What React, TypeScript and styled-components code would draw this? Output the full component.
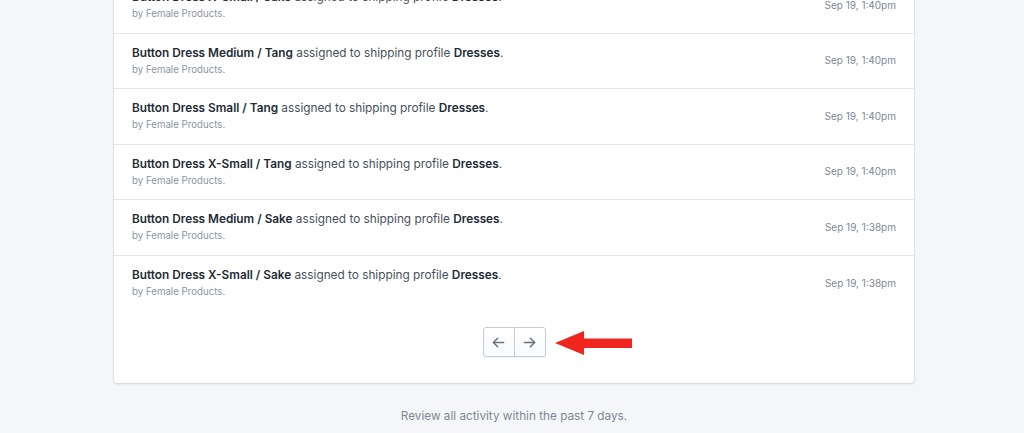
import React from "react";
import styled, { createGlobalStyle } from "styled-components";

const Global = createGlobalStyle`
  html, body { margin: 0; padding: 0; height: 100%; overflow: hidden; }
  body {
    background: #f4f6f8;
    font-family: Inter, "Noto Sans", "Liberation Sans", sans-serif;
    -webkit-font-smoothing: antialiased;
  }
`;

const Page = styled.div`
  width: 1024px;
  height: 433px;
  overflow: hidden;
  display: flex;
  flex-direction: column;
  align-items: center;
`;

const Card = styled.section`
  width: 800px;
  box-sizing: border-box;
  margin: -22px 0 0 4px;
  background: #fff;
  border-radius: 0 0 3px 3px;
  box-shadow: 0 0 0 1px rgba(63, 63, 68, 0.05), 0 1px 3px 0 rgba(63, 63, 68, 0.15);
`;

const List = styled.ul`
  list-style: none;
  margin: 0;
  padding: 0;
`;

const Row = styled.li`
  display: flex;
  align-items: center;
  justify-content: space-between;
  box-sizing: border-box;
  height: 55.5px;
  padding: 0 18px;
  border-bottom: 1px solid #e3e6ea;
  &:last-child { border-bottom: none; }
`;

const Body = styled.div`
  display: flex;
  flex-direction: column;
  margin-top: 0.5px;
`;

const Title = styled.div`
  font-size: 11.8px;
  line-height: 16px;
  color: #454f5b;
  b { font-weight: 600; color: #212b36; }
`;

const Sub = styled.div`
  font-size: 9.7px;
  line-height: 16px;
  margin-top: 1px;
  color: #8b95a0;
`;

const Time = styled.div`
  font-size: 10px;
  color: #7d8893;
  margin-top: -1px;
`;

const Pager = styled.div`
  position: relative;
  display: flex;
  justify-content: center;
  padding: 16px 0 26px;
`;

const Group = styled.div`
  display: flex;
`;

const PageButton = styled.button<{ $first?: boolean }>`
  width: 32px;
  height: 30px;
  padding: 0;
  display: flex;
  align-items: center;
  justify-content: center;
  background: linear-gradient(180deg, #fff, #f9fafb);
  border: 1px solid #c4cdd5;
  border-radius: ${(p) => (p.$first ? "3px 0 0 3px" : "0 3px 3px 0")};
  margin-left: ${(p) => (p.$first ? "0" : "-1px")};
  box-shadow: 0 1px 0 0 rgba(22, 29, 37, 0.05);
  color: #637381;
  cursor: pointer;
`;

const Pointer = styled.svg`
  position: absolute;
  left: 441px;
  top: 20px;
`;

const Footer = styled.p`
  margin: 26px 0 0;
  font-size: 11.75px;
  color: #7d8893;
  text-align: center;
  padding-left: 4px;
`;

const Arrow = ({ dir }: { dir: "left" | "right" }) => (
  <svg width="17" height="17" viewBox="0 0 20 20" fill="none" stroke="currentColor" strokeWidth="1.7" strokeLinecap="round" strokeLinejoin="round">
    {dir === "left" ? (
      <>
        <path d="M16 10H4" />
        <path d="M9 5l-5 5 5 5" />
      </>
    ) : (
      <>
        <path d="M4 10h12" />
        <path d="M11 5l5 5-5 5" />
      </>
    )}
  </svg>
);

const rows = [
  { item: "Button Dress X-Small / Sake", time: "Sep 19, 1:40pm" },
  { item: "Button Dress Medium / Tang", time: "Sep 19, 1:40pm" },
  { item: "Button Dress Small / Tang", time: "Sep 19, 1:40pm" },
  { item: "Button Dress X-Small / Tang", time: "Sep 19, 1:40pm" },
  { item: "Button Dress Medium / Sake", time: "Sep 19, 1:38pm" },
  { item: "Button Dress X-Small / Sake", time: "Sep 19, 1:38pm" },
];

export default function App() {
  return (
    <Page>
      <Global />
      <Card>
        <List>
          {rows.map((r, i) => (
            <Row key={i}>
              <Body>
                <Title>
                  <b>{r.item}</b> assigned to shipping profile <b>Dresses</b>.
                </Title>
                <Sub>by Female Products.</Sub>
              </Body>
              <Time>{r.time}</Time>
            </Row>
          ))}
        </List>
        <Pager>
          <Group>
            <PageButton $first aria-label="Previous"><Arrow dir="left" /></PageButton>
            <PageButton aria-label="Next"><Arrow dir="right" /></PageButton>
          </Group>
          <Pointer width="78" height="26" viewBox="0 0 78 26">
            <polygon points="0,12 29,0 29,7.5 77,7.5 77,17 29,17 29,24" fill="#f0261e" />
          </Pointer>
        </Pager>
      </Card>
      <Footer>Review all activity within the past 7 days.</Footer>
    </Page>
  );
}
